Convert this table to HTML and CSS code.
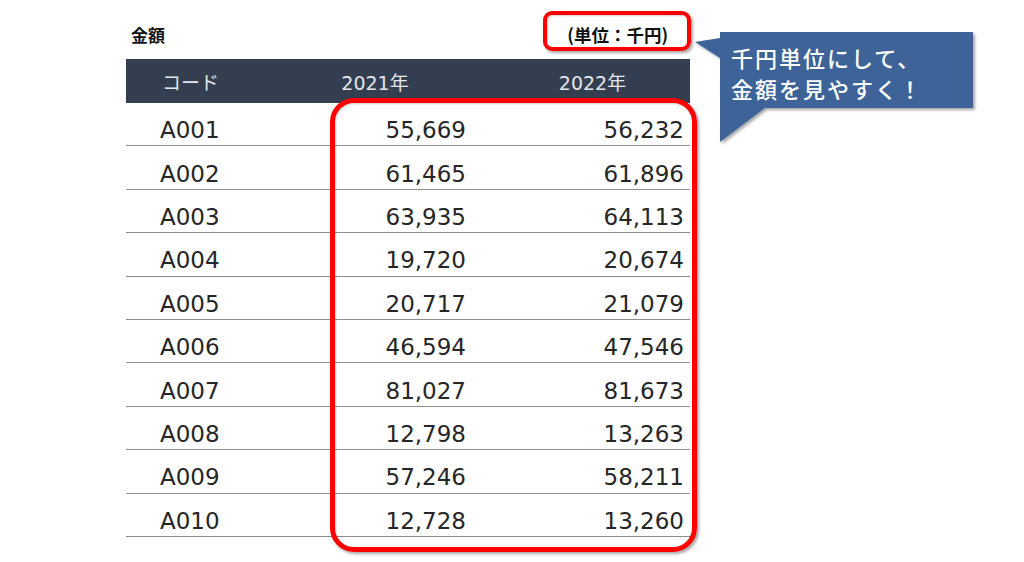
FILE: index.html
```html
<!DOCTYPE html>
<html lang="ja">
<head>
<meta charset="utf-8">
<link rel="stylesheet" href="styles.css">
</head>
<body>
<div class="page">
  <div class="table-wrap">
    <div class="caption">
      <span class="title">金額</span>
      <span class="unit">(単位：千円)</span>
    </div>
    <div class="table">
      <div class="row head"><span class="c1">コード</span><span class="c2">2021年</span><span class="c3">2022年</span></div>
      <div class="row"><span class="c1">A001</span><span class="c2">55,669</span><span class="c3">56,232</span></div>
      <div class="row"><span class="c1">A002</span><span class="c2">61,465</span><span class="c3">61,896</span></div>
      <div class="row"><span class="c1">A003</span><span class="c2">63,935</span><span class="c3">64,113</span></div>
      <div class="row"><span class="c1">A004</span><span class="c2">19,720</span><span class="c3">20,674</span></div>
      <div class="row"><span class="c1">A005</span><span class="c2">20,717</span><span class="c3">21,079</span></div>
      <div class="row"><span class="c1">A006</span><span class="c2">46,594</span><span class="c3">47,546</span></div>
      <div class="row"><span class="c1">A007</span><span class="c2">81,027</span><span class="c3">81,673</span></div>
      <div class="row"><span class="c1">A008</span><span class="c2">12,798</span><span class="c3">13,263</span></div>
      <div class="row"><span class="c1">A009</span><span class="c2">57,246</span><span class="c3">58,211</span></div>
      <div class="row"><span class="c1">A010</span><span class="c2">12,728</span><span class="c3">13,260</span></div>
    </div>
    <div class="mark mark-unit"></div>
    <div class="mark mark-values"></div>
  </div>
  <div class="callout">
    <svg class="callout-shape" width="290" height="120" viewBox="0 0 290 120">
      <defs>
        <filter id="sh" x="-10%" y="-10%" width="120%" height="130%">
          <feDropShadow dx="2" dy="2" stdDeviation="1.5" flood-color="#000" flood-opacity="0.35"/>
        </filter>
      </defs>
      <path d="M25 0 H278 V76 H70 L25 110 V26 L0 10 L25 6 Z" fill="#3c6498" filter="url(#sh)"/>
    </svg>
    <div class="callout-text">千円単位にして、<br>金額を見やすく！</div>
  </div>
</div>
</body>
</html>
```

FILE: styles.css
```css
* { box-sizing: border-box; }
html, body { margin: 0; padding: 0; background: #fff; }
body {
  width: 1024px;
  height: 562px;
  overflow: hidden;
  font-family: "DejaVu Sans", "Noto Sans CJK JP", sans-serif;
}
.page {
  display: flex;
  align-items: flex-start;
  padding-left: 126px;
}
.table-wrap {
  position: relative;
  width: 564px;
}
.caption {
  height: 59px;
  padding: 10px 22px 0 5px;
  display: flex;
  align-items: center;
  justify-content: space-between;
  font-family: "Noto Sans CJK JP", sans-serif;
  font-weight: bold;
  color: #111;
}
.title { font-size: 17px; }
.unit { font-size: 17.5px; }
.table { display: flex; flex-direction: column; }
.row {
  display: grid;
  grid-template-columns: 129px 240px 195px;
  height: 43.4px;
  align-items: center;
  border-bottom: 1px solid #8e8e8e;
  font-size: 23px;
  color: #262626;
  padding-top: 12px;
}
.row .c1 { padding-left: 34px; }
.row .c2 { text-align: right; padding-right: 29px; }
.row .c3 { text-align: right; padding-right: 6px; }
.row.head {
  height: 44px;
  background: #333f50;
  border-bottom: none;
  color: #e3e6ea;
  font-size: 19px;
  padding-top: 0;
}
.row.head span { text-align: center; padding: 0; }
.mark {
  position: absolute;
  border: 4.5px solid #ff0000;
  box-shadow: 2px 2px 3px rgba(0,0,0,0.35), inset 1px 1px 2px rgba(0,0,0,0.2);
}
.mark-unit {
  left: 417px;
  top: 11px;
  width: 148px;
  height: 40px;
  border-radius: 9px;
  border-width: 4px;
}
.mark-values {
  left: 204px;
  top: 98px;
  width: 367px;
  height: 454px;
  border-radius: 24px;
  border-width: 5px;
}
.callout {
  position: relative;
  margin-left: 5px;
  margin-top: 32px;
  width: 290px;
  height: 120px;
}
.callout-shape {
  position: absolute;
  left: 0;
  top: 0;
}
.callout-text {
  position: relative;
  padding: 10px 0 0 36px;
  font-family: "Noto Sans CJK JP", sans-serif;
  font-size: 22px;
  font-weight: 500;
  line-height: 31px;
  color: #fff;
  letter-spacing: 2px;
}
```
